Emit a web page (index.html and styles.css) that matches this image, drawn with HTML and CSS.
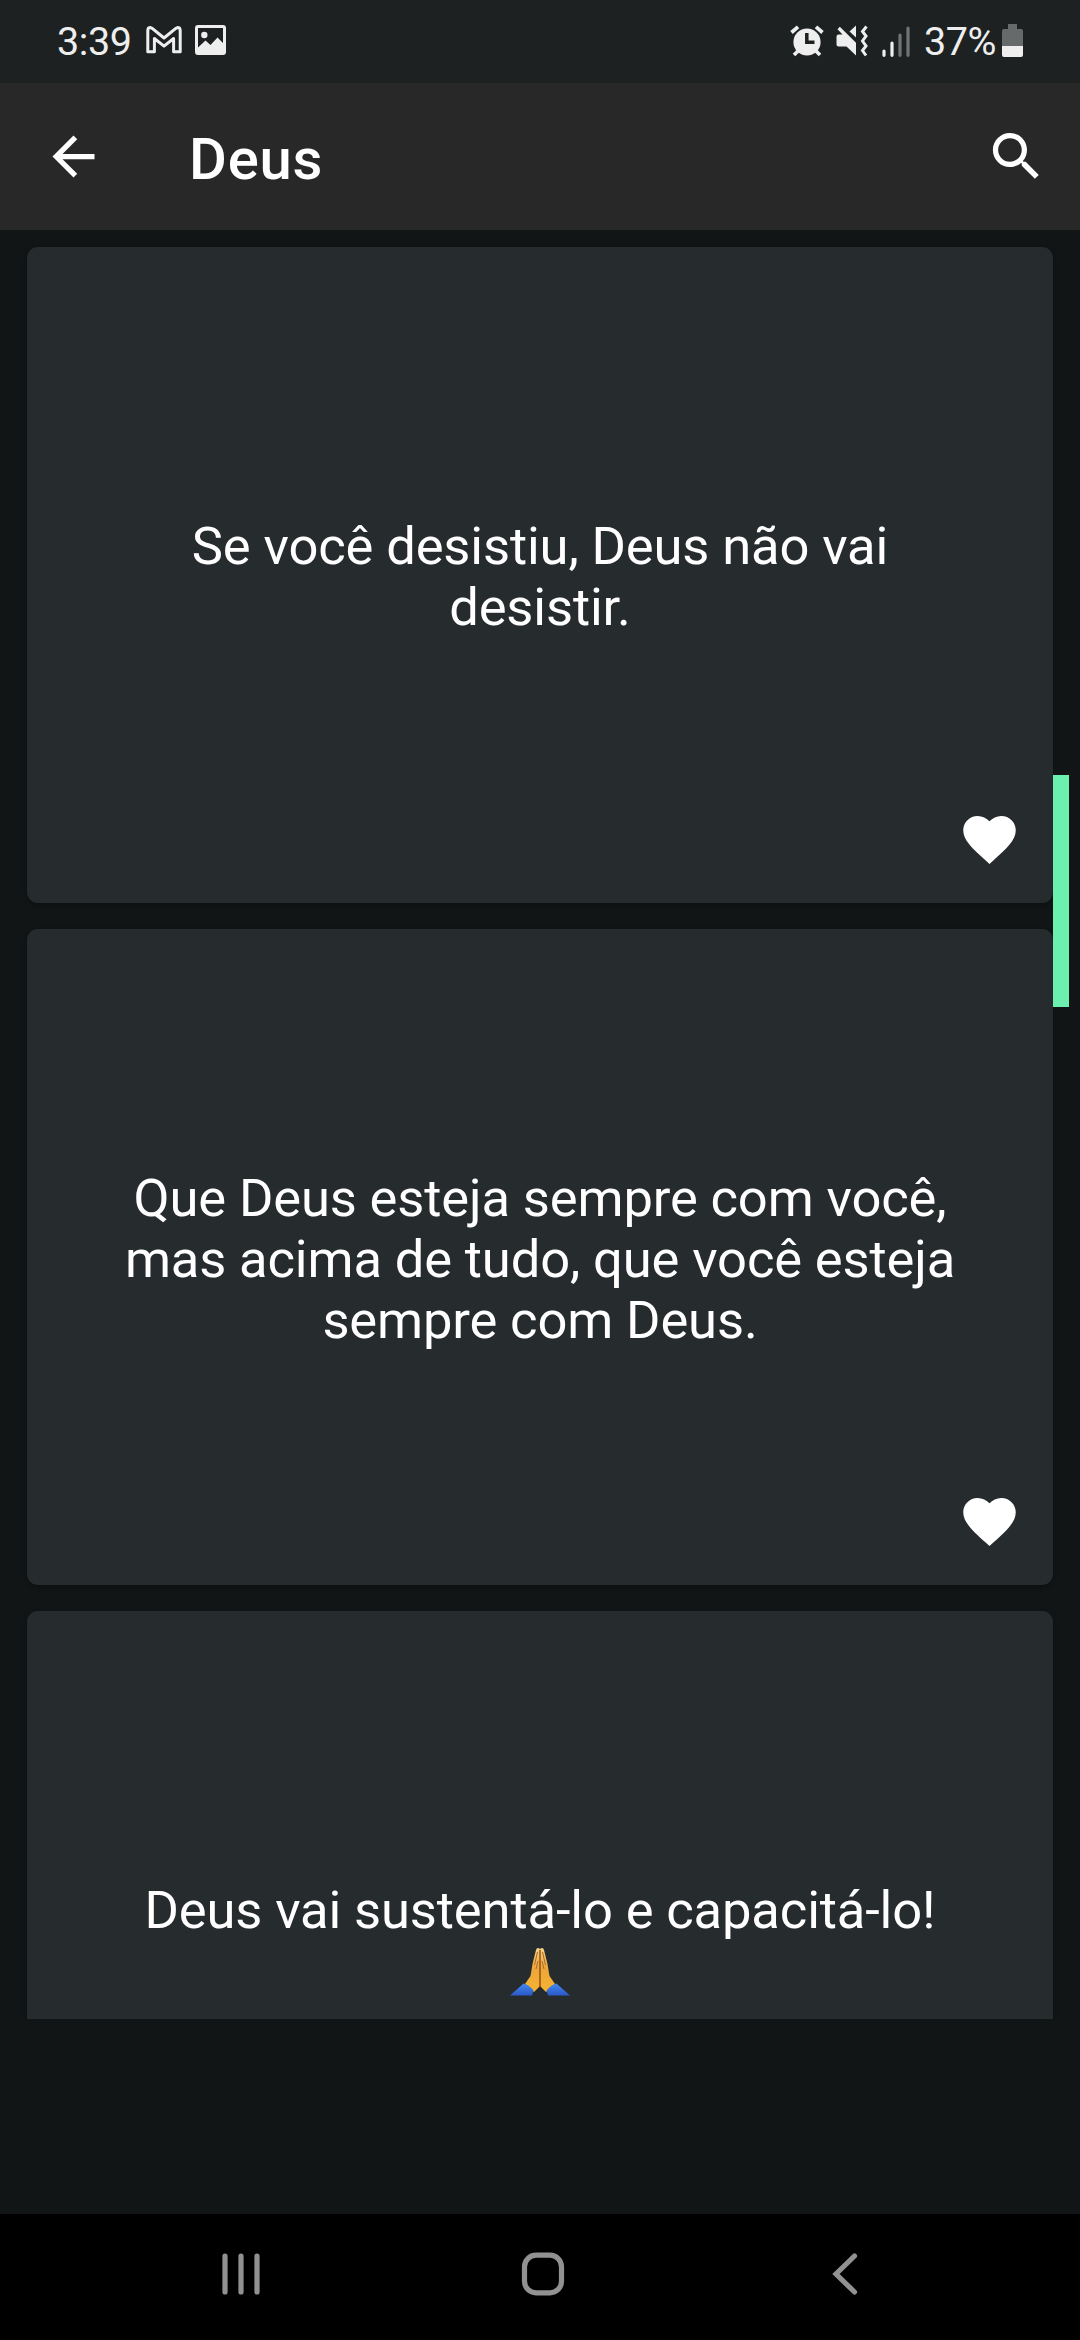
FILE: index.html
```html
<!DOCTYPE html>
<html lang="pt-BR">
<head>
<meta charset="utf-8">
<title>Deus</title>
<link rel="stylesheet" href="styles.css">
</head>
<body>
<div class="screen">
  <header class="status">
    <div class="status-side">
      <span class="clock">3:39</span>
      <svg class="gmail" width="36" height="28" viewBox="0 0 36 28" fill="none" stroke="#eee" stroke-width="3" stroke-linejoin="round"><path d="M1.8 4.5Q1.8 1.6 4.5 1.6L6.2 2.3 18 12 29.8 2.3 31.5 1.6Q34.2 1.6 34.2 4.5V25.8H27.6V12.5L18 20.2 8.4 12.5V25.8H1.8Z"/></svg>
      <svg class="photo" width="31" height="30" viewBox="0 0 31 30"><path fill="#eee" fill-rule="evenodd" d="M3 0H28Q31 0 31 3V27Q31 30 28 30H3Q0 30 0 27V3Q0 0 3 0ZM3 3V22.5L10.5 15.5 15.5 20 22.5 12.5 28 18V3Z"/><circle cx="9.3" cy="10" r="3.2" fill="#eee"/></svg>
    </div>
    <div class="status-side">
      <svg class="alarm" width="34" height="32" viewBox="0 0 34 32"><circle cx="17" cy="17" r="13.6" fill="#eee"/><path d="M1.5 7.5 8 1.8M32.500 7.500 26 1.800M8 26l-4 4M26 26l4 4" stroke="#eee" stroke-width="3.700"/><path d="M16.800 8v9.200h7.700" stroke="#1d2122" stroke-width="3.500" fill="none"/></svg>
      <svg class="mute" width="32" height="32" viewBox="0 0 32 32"><path fill="#eee" d="M2.500 9.500H6.500L1.500 4.300 3.800 1.700 20 17.800V30.500L10.500 21.500H2.500Q.500 21.500.500 19.500V11.500Q.500 9.500 2.500 9.500ZM13.500 6.500 20 .500V12.500Z"/><path d="M30.500 1.500 26.500 6.500 30 11 26.500 16 30 21 26.500 25.500 30 30.500" fill="none" stroke="#eee" stroke-width="3"/></svg>
      <svg class="signal" width="28" height="31" viewBox="0 0 28 31" stroke-width="3.200" stroke-linecap="round"><path d="M2 25v4.300M10 17v12.300" stroke="#eee"/><path d="M18 9v20.300M26 2v27.300" stroke="#707475"/></svg>
      <span class="percent">37%</span>
      <svg class="battery" width="21" height="33" viewBox="0 0 21 33"><path fill="#666a6b" d="M6 0h9v5h4q2 0 2 2v15H0V7q0-2 2-2h4Z"/><path fill="#eee" d="M0 22h21v9q0 2-2 2H2q-2 0-2-2Z"/></svg>
    </div>
  </header>
  <div class="appbar">
    <svg class="back" width="63" height="63" viewBox="0 0 24 24" fill="#fff"><path d="M20 11H7.830l5.590-5.590L12 4l-8 8 8 8 1.410-1.410L7.830 13H20v-2z"/></svg>
    <h1>Deus</h1>
    <svg width="63" height="63" viewBox="0 0 24 24" fill="#fff"><path d="M15.500 14h-.790l-.280-.270C15.410 12.590 16 11.110 16 9.500 16 5.910 13.090 3 9.500 3S3 5.910 3 9.500 5.910 16 9.500 16c1.610 0 3.090-.590 4.230-1.570l.270.280v.790l5 4.990L20.490 19l-4.990-5zm-6 0C7.010 14 5 11.990 5 9.500S7.010 5 9.500 5 14 7.010 14 9.500 11.990 14 9.500 14z"/></svg>
  </div>
  <main class="list">
    <article class="card">
      <p>Se você desistiu, Deus não vai<br>desistir.</p>
      <svg class="heart" viewBox="0 0 24 24"><path d="M12 21.350l-1.450-1.320C5.400 15.360 2 12.280 2 8.500 2 5.420 4.420 3 7.500 3c1.740 0 3.410.810 4.500 2.090C13.090 3.810 14.760 3 16.500 3 19.580 3 22 5.420 22 8.500c0 3.780-3.400 6.860-8.550 11.540L12 21.350z"/></svg>
    </article>
    <article class="card">
      <p>Que Deus esteja sempre com você,<br>mas acima de tudo, que você esteja<br>sempre com Deus.</p>
      <svg class="heart" viewBox="0 0 24 24"><path d="M12 21.350l-1.450-1.320C5.400 15.360 2 12.280 2 8.500 2 5.420 4.420 3 7.500 3c1.740 0 3.410.810 4.500 2.090C13.090 3.810 14.760 3 16.500 3 19.580 3 22 5.420 22 8.500c0 3.780-3.400 6.860-8.550 11.540L12 21.350z"/></svg>
    </article>
    <article class="card">
      <p>Deus vai sustentá-lo e capacitá-lo!<br><svg class="pray" width="60" height="49" viewBox="0 0 60 49" role="img" aria-label="Mãos em oração">
        <defs>
          <linearGradient id="skin" x1="0" y1="0" x2="0" y2="1"><stop offset="0" stop-color="#f7d488"/><stop offset=".45" stop-color="#eda63a"/><stop offset="1" stop-color="#f5b331"/></linearGradient>
          <linearGradient id="cuff" x1="0" y1="0" x2="0" y2="1"><stop offset="0" stop-color="#4288ee"/><stop offset="1" stop-color="#2b59c8"/></linearGradient>
        </defs>
        <path fill="url(#skin)" d="M30 2Q27-.5 26 3L22.500 17 20.500 29 15 37 24 45 30 39 36 45 45 37 39.500 29 37.500 17 34 3Q33-.5 30 2Z"/>
        <path d="M30 3V40" stroke="#935015" stroke-width="1.500"/>
        <path d="M27.500 5 24.500 18M32.500 5 35.500 18M28 14 26 22M32 14 34 22" stroke="#ad6825" stroke-width="1" fill="none"/>
        <path fill="url(#cuff)" d="M0 48.500 13.500 36.500Q18 37 23.500 43.500L22 48.500ZM60 48.500 46.500 36.500Q42 37 36.500 43.500L38 48.500Z"/>
      </svg></p>
    </article>
    <div class="scrollbar"></div>
  </main>
  <div class="banner"></div>
  <nav class="navbar">
    <svg width="46" height="46" viewBox="0 0 46 46" stroke="#919191" stroke-width="5.200" stroke-linecap="round"><path d="M7 5v36M23 5v36M39 5v36"/></svg>
    <svg width="46" height="46" viewBox="0 0 46 46" fill="none" stroke="#919191" stroke-width="5.200"><rect x="4.500" y="4.200" width="37" height="37.600" rx="11.500"/></svg>
    <svg width="46" height="46" viewBox="0 0 46 46" fill="none" stroke="#919191" stroke-width="5.200" stroke-linecap="round"><path d="M32.500 5 14 23l18.500 18"/></svg>
  </nav>
</div>
</body>
</html>
```
FILE: styles.css
```css
* { box-sizing: border-box; }
body { margin: 0; background: #111516; font-family: Roboto, sans-serif; color: #fff; }
svg { display: block; flex: none; }
.screen { display: flex; flex-direction: column; width: 1080px; height: 2340px; overflow: hidden; }
.status { display: flex; justify-content: space-between; height: 83px; padding: 0 57px 0 57px; background: #1d2122; color: #eee; font-size: 39.5px; }
.status-side { display: flex; align-items: flex-start; }
.clock, .percent { line-height: 46px; margin-top: 19px; letter-spacing: -0.4px; }
.clock { width: 89px; }
.percent { width: 78px; }
.gmail { margin-top: 26px; }
.photo { margin: 25px 0 0 13px; }
.alarm { margin: 25px 12px 0 0; }
.mute { margin: 25px 14px 0 0; }
.signal { margin: 26px 14px 0 0; }
.battery { margin-top: 24px; }
.appbar { display: flex; align-items: center; height: 147px; padding: 0 32px 0 42px; background: #282828; }
.appbar h1 { flex: 1; margin: 4px 0 0 84px; font-size: 58px; font-weight: 500; line-height: 68px; letter-spacing: .8px; }
.list { position: relative; display: flex; flex-direction: column; gap: 26px; height: 1789px; padding: 17px 27px 0; overflow: hidden; }
.card { display: grid; flex: none; height: 656px; border-radius: 11px; background: #262b2e; box-shadow: 0 2px 4px rgba(0, 0, 0, .25); }
.card > * { grid-area: 1 / 1; }
.card p { place-self: center; margin: 4px 0 0; text-align: center; white-space: nowrap; font-size: 52.5px; line-height: 61px; letter-spacing: -.13px; }
.heart { place-self: end; width: 63px; height: 63px; margin: 0 32px 32px 0; fill: #fff; }
.pray { display: inline-block; vertical-align: -7px; }
.scrollbar { position: absolute; top: 545px; right: 11px; width: 16px; height: 232px; background: #6cf0b0; }
.banner { flex: 1; }
.navbar { display: flex; justify-content: space-between; align-items: center; height: 126px; padding: 0 212px 6px 218px; background: #000; }
```
